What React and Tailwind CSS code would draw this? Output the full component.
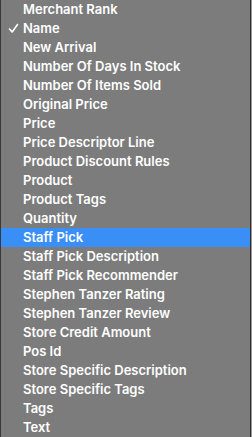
import React from "react";

const items = [
  "Merchant Rank",
  "Name",
  "New Arrival",
  "Number Of Days In Stock",
  "Number Of Items Sold",
  "Original Price",
  "Price",
  "Price Descriptor Line",
  "Product Discount Rules",
  "Product",
  "Product Tags",
  "Quantity",
  "Staff Pick",
  "Staff Pick Description",
  "Staff Pick Recommender",
  "Stephen Tanzer Rating",
  "Stephen Tanzer Review",
  "Store Credit Amount",
  "Pos Id",
  "Store Specific Description",
  "Store Specific Tags",
  "Tags",
  "Text",
];

export default function App() {
  const checked = "Name";
  const active = "Staff Pick";

  return (
    <div className="w-[252px] h-[437px] bg-[#7c7c7c] border-l border-[#3a3a3a] flex">
      <ul className="flex-1 flex flex-col font-['Inter',sans-serif] text-[13px] font-semibold text-white">
        {items.map((label) => (
          <li
            key={label}
            className={`h-[19px] flex items-center pl-[22px] relative ${label === active ? "bg-[#3a8ff7]" : ""}`}
          >
            {label === checked && (
              <svg className="absolute left-[7px] top-[4px]" width="11" height="11" viewBox="0 0 11 11" fill="none">
                <path d="M1.5 6 L4.2 9 L9.5 1.5" stroke="white" strokeWidth="1.6" strokeLinecap="round" strokeLinejoin="round" />
              </svg>
            )}
            {label}
          </li>
        ))}
      </ul>
      <div className="w-[1px] bg-[#2e2e2e]" />
      <div className="w-[1px] bg-[#9a9a9a]" />
    </div>
  );
}
